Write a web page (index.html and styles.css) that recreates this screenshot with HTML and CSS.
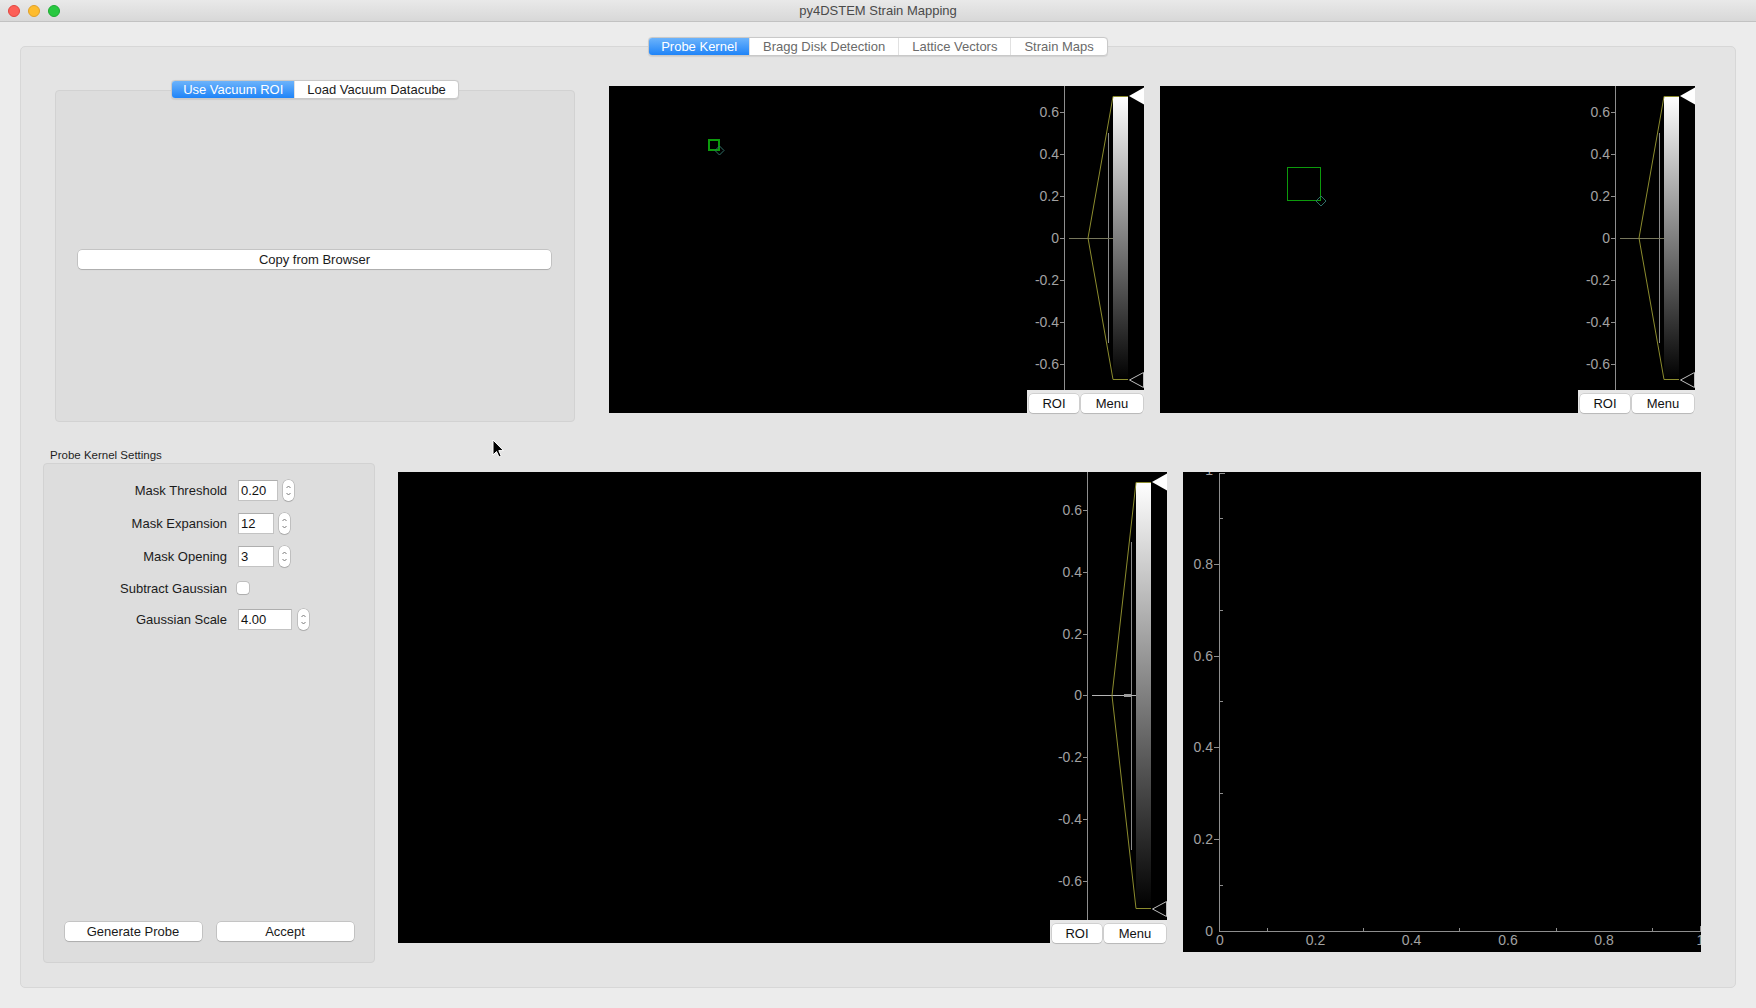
FILE: index.html
```html
<!DOCTYPE html>
<html>
<head>
<meta charset="utf-8">
<title>py4DSTEM Strain Mapping</title>
<link rel="stylesheet" href="styles.css">
</head>
<body>
<div class="titlebar">
  <div class="lights"><span class="light red"></span><span class="light yellow"></span><span class="light green"></span></div>
  <div class="title">py4DSTEM Strain Mapping</div>
  <div></div>
</div>
<div class="content">
  <div class="tabbar-wrap">
    <div class="tabbar outer">
      <div class="tab active">Probe Kernel</div>
      <div class="tab">Bragg Disk Detection</div>
      <div class="tab">Lattice Vectors</div>
      <div class="tab">Strain Maps</div>
    </div>
  </div>
  <div class="pane">
    <div class="row-top">
      <div class="vac">
        <div class="tabbar inner">
          <div class="tab active">Use Vacuum ROI</div>
          <div class="tab">Load Vacuum Datacube</div>
        </div>
        <div class="groupbox vacbox">
          <div class="btn copybtn">Copy from Browser</div>
        </div>
      </div>

      <div class="imgview iv-top first">
        <div class="img-area">
          <svg class="overlay">
            <rect x="100" y="54" width="10" height="10" fill="none" stroke="#0c9a0c" stroke-width="2"/>
            <polygon points="110.5,60 115,64.5 110.5,69 106,64.5" fill="none" stroke="#2f6f66" stroke-width="1"/>
          </svg>
        </div>
        <div class="hist-col">
          <div class="hist-area">
            <svg width="117" height="304" viewBox="0 0 117 304">
              <defs><linearGradient id="ga" x1="0" y1="0" x2="0" y2="1"><stop offset="0" stop-color="#ffffff"/><stop offset="1" stop-color="#000000"/></linearGradient></defs>
              <line x1="37.5" y1="0" x2="37.5" y2="304" class="ax"/>
              <line x1="33" y1="26.5" x2="37" y2="26.5" class="ax"/>
              <line x1="33" y1="68.5" x2="37" y2="68.5" class="ax"/>
              <line x1="33" y1="110.5" x2="37" y2="110.5" class="ax"/>
              <line x1="33" y1="152.5" x2="37" y2="152.5" class="ax"/>
              <line x1="33" y1="194.5" x2="37" y2="194.5" class="ax"/>
              <line x1="33" y1="236.5" x2="37" y2="236.5" class="ax"/>
              <line x1="33" y1="278.5" x2="37" y2="278.5" class="ax"/>
              <text x="32" y="31" class="tk">0.6</text>
              <text x="32" y="73" class="tk">0.4</text>
              <text x="32" y="115" class="tk">0.2</text>
              <text x="32" y="157" class="tk">0</text>
              <text x="32" y="199" class="tk">-0.2</text>
              <text x="32" y="241" class="tk">-0.4</text>
              <text x="32" y="283" class="tk">-0.6</text>
              <rect x="86" y="10" width="15" height="284" fill="url(#ga)"/>
              <line x1="81.5" y1="47" x2="81.5" y2="257" class="vline"/>
              <line x1="42" y1="152.5" x2="86" y2="152.5" class="hline"/>
              <polyline points="101,10.5 86,10.5 61,152 86,293.5 101,293.5" class="olive"/>
              <polygon points="102,10 117,1.5 117,18.5" fill="#ffffff"/>
              <polygon points="102.5,294 116.5,286.5 116.5,301.5" class="tri-out"/>
            </svg>
          </div>
          <div class="hist-btns"><div class="pbtn roi">ROI</div><div class="pbtn menu">Menu</div></div>
        </div>
      </div>

      <div class="imgview iv-top second">
        <div class="img-area">
          <svg class="overlay">
            <rect x="127.5" y="81.5" width="33" height="33" fill="none" stroke="#0c9a0c" stroke-width="1"/>
            <polygon points="161,110 166,115 161,120 156,115" fill="none" stroke="#2f6f66" stroke-width="1"/>
          </svg>
        </div>
        <div class="hist-col">
          <div class="hist-area">
            <svg width="117" height="304" viewBox="0 0 117 304">
              <defs><linearGradient id="gb" x1="0" y1="0" x2="0" y2="1"><stop offset="0" stop-color="#ffffff"/><stop offset="1" stop-color="#000000"/></linearGradient></defs>
              <line x1="37.5" y1="0" x2="37.5" y2="304" class="ax"/>
              <line x1="33" y1="26.5" x2="37" y2="26.5" class="ax"/>
              <line x1="33" y1="68.5" x2="37" y2="68.5" class="ax"/>
              <line x1="33" y1="110.5" x2="37" y2="110.5" class="ax"/>
              <line x1="33" y1="152.5" x2="37" y2="152.5" class="ax"/>
              <line x1="33" y1="194.5" x2="37" y2="194.5" class="ax"/>
              <line x1="33" y1="236.5" x2="37" y2="236.5" class="ax"/>
              <line x1="33" y1="278.5" x2="37" y2="278.5" class="ax"/>
              <text x="32" y="31" class="tk">0.6</text>
              <text x="32" y="73" class="tk">0.4</text>
              <text x="32" y="115" class="tk">0.2</text>
              <text x="32" y="157" class="tk">0</text>
              <text x="32" y="199" class="tk">-0.2</text>
              <text x="32" y="241" class="tk">-0.4</text>
              <text x="32" y="283" class="tk">-0.6</text>
              <rect x="86" y="10" width="15" height="284" fill="url(#gb)"/>
              <line x1="81.5" y1="47" x2="81.5" y2="257" class="vline"/>
              <line x1="42" y1="152.5" x2="86" y2="152.5" class="hline"/>
              <polyline points="101,10.5 86,10.5 61,152 86,293.5 101,293.5" class="olive"/>
              <polygon points="102,10 117,1.5 117,18.5" fill="#ffffff"/>
              <polygon points="102.5,294 116.5,286.5 116.5,301.5" class="tri-out"/>
            </svg>
          </div>
          <div class="hist-btns"><div class="pbtn roi">ROI</div><div class="pbtn menu">Menu</div></div>
        </div>
      </div>
    </div>

    <div class="row-bottom">
      <div class="settings">
        <div class="settings-label">Probe Kernel Settings</div>
        <div class="groupbox settings-box">
          <div class="form">
            <div class="flabel">Mask Threshold</div>
            <div class="field"><div class="input w40">0.20</div><div class="spin"><svg width="11" height="21" viewBox="0 0 11 21"><polyline points="3.5,8 5.5,6 7.5,8" class="chev"/><polyline points="3.5,13 5.5,15 7.5,13" class="chev"/></svg></div></div>
            <div class="flabel">Mask Expansion</div>
            <div class="field"><div class="input w36">12</div><div class="spin"><svg width="11" height="21" viewBox="0 0 11 21"><polyline points="3.5,8 5.5,6 7.5,8" class="chev"/><polyline points="3.5,13 5.5,15 7.5,13" class="chev"/></svg></div></div>
            <div class="flabel">Mask Opening</div>
            <div class="field"><div class="input w36">3</div><div class="spin"><svg width="11" height="21" viewBox="0 0 11 21"><polyline points="3.5,8 5.5,6 7.5,8" class="chev"/><polyline points="3.5,13 5.5,15 7.5,13" class="chev"/></svg></div></div>
            <div class="flabel">Subtract Gaussian</div>
            <div class="field"><div class="check"></div></div>
            <div class="flabel">Gaussian Scale</div>
            <div class="field gap6"><div class="input w54">4.00</div><div class="spin"><svg width="11" height="21" viewBox="0 0 11 21"><polyline points="3.5,8 5.5,6 7.5,8" class="chev"/><polyline points="3.5,13 5.5,15 7.5,13" class="chev"/></svg></div></div>
          </div>
          <div class="actions">
            <div class="btn">Generate Probe</div>
            <div class="btn">Accept</div>
          </div>
        </div>
      </div>

      <div class="imgview iv-bottom">
        <div class="img-area"></div>
        <div class="hist-col">
          <div class="hist-area">
            <svg width="117" height="448" viewBox="0 0 117 448">
              <defs><linearGradient id="gc" x1="0" y1="0" x2="0" y2="1"><stop offset="0" stop-color="#ffffff"/><stop offset="1" stop-color="#000000"/></linearGradient></defs>
              <line x1="37.5" y1="0" x2="37.5" y2="448" class="ax"/>
              <line x1="33" y1="38.5" x2="37" y2="38.5" class="ax"/>
              <line x1="33" y1="100.5" x2="37" y2="100.5" class="ax"/>
              <line x1="33" y1="162.5" x2="37" y2="162.5" class="ax"/>
              <line x1="33" y1="223.5" x2="37" y2="223.5" class="ax"/>
              <line x1="33" y1="285.5" x2="37" y2="285.5" class="ax"/>
              <line x1="33" y1="347.5" x2="37" y2="347.5" class="ax"/>
              <line x1="33" y1="409.5" x2="37" y2="409.5" class="ax"/>
              <text x="32" y="43" class="tk">0.6</text>
              <text x="32" y="105" class="tk">0.4</text>
              <text x="32" y="167" class="tk">0.2</text>
              <text x="32" y="228" class="tk">0</text>
              <text x="32" y="290" class="tk">-0.2</text>
              <text x="32" y="352" class="tk">-0.4</text>
              <text x="32" y="414" class="tk">-0.6</text>
              <rect x="86" y="10" width="15" height="427" fill="url(#gc)"/>
              <line x1="81.5" y1="70" x2="81.5" y2="378" class="vline"/>
              <line x1="42" y1="223.5" x2="86" y2="223.5" class="hline light"/>
              <line x1="74" y1="223.5" x2="81" y2="223.5" stroke="#9a9a9a" stroke-width="3"/>
              <polyline points="101,10.5 86,10.5 62,223.5 86,436.5 101,436.5" class="olive"/>
              <polygon points="102,10 117,1.5 117,18.5" fill="#ffffff"/>
              <polygon points="102.5,437 116.5,429.5 116.5,444.5" class="tri-out"/>
            </svg>
          </div>
          <div class="hist-btns"><div class="pbtn roi">ROI</div><div class="pbtn menu">Menu</div></div>
        </div>
      </div>

      <div class="plot2d">
        <svg width="518" height="480" viewBox="0 0 518 480">
          <line x1="36.5" y1="1" x2="36.5" y2="459.5" class="ax"/>
          <line x1="36" y1="459.5" x2="518" y2="459.5" class="ax"/>
          <line x1="36" y1="1.5" x2="42" y2="1.5" class="ax"/>
          <line x1="517.5" y1="454" x2="517.5" y2="459" class="ax"/>
          <line x1="31" y1="92.5" x2="36" y2="92.5" class="ax"/>
          <line x1="31" y1="184.5" x2="36" y2="184.5" class="ax"/>
          <line x1="31" y1="275.5" x2="36" y2="275.5" class="ax"/>
          <line x1="31" y1="367.5" x2="36" y2="367.5" class="ax"/>
          <line x1="37" y1="46.5" x2="40" y2="46.5" class="ax"/>
          <line x1="37" y1="138.5" x2="40" y2="138.5" class="ax"/>
          <line x1="37" y1="229.5" x2="40" y2="229.5" class="ax"/>
          <line x1="37" y1="321.5" x2="40" y2="321.5" class="ax"/>
          <line x1="37" y1="413.5" x2="40" y2="413.5" class="ax"/>
          <line x1="84.5" y1="456" x2="84.5" y2="459" class="ax"/>
          <line x1="180.5" y1="456" x2="180.5" y2="459" class="ax"/>
          <line x1="276.5" y1="456" x2="276.5" y2="459" class="ax"/>
          <line x1="373.5" y1="456" x2="373.5" y2="459" class="ax"/>
          <line x1="469.5" y1="456" x2="469.5" y2="459" class="ax"/>
          <text x="30" y="3" class="tk">1</text>
          <text x="30" y="97" class="tk">0.8</text>
          <text x="30" y="189" class="tk">0.6</text>
          <text x="30" y="280" class="tk">0.4</text>
          <text x="30" y="372" class="tk">0.2</text>
          <text x="30" y="464" class="tk">0</text>
          <text x="37" y="473" class="tk mid">0</text>
          <text x="132.5" y="473" class="tk mid">0.2</text>
          <text x="228.5" y="473" class="tk mid">0.4</text>
          <text x="325" y="473" class="tk mid">0.6</text>
          <text x="421" y="473" class="tk mid">0.8</text>
          <text x="517.5" y="473" class="tk mid">1</text>
        </svg>
      </div>
    </div>
  </div>
</div>
<svg class="cursor" width="13" height="20" viewBox="0 0 13 20"><path d="M1,1 L1,16 L4.5,12.5 L7,18 L9.2,17 L6.8,11.6 L11.5,11.6 Z" fill="#000" stroke="#fff" stroke-width="1" stroke-linejoin="round"/></svg>
</body>
</html>
```
FILE: styles.css
```css
* { box-sizing: border-box; margin: 0; padding: 0; }
html, body { width: 1756px; height: 1008px; overflow: hidden; }
body {
  background: #ececec;
  font-family: "Liberation Sans", Arial, sans-serif;
  font-size: 13px;
  color: #1b1b1b;
  position: relative;
}

/* title bar */
.titlebar {
  height: 22px;
  display: grid;
  grid-template-columns: 1fr auto 1fr;
  align-items: center;
  background: linear-gradient(#e9e9e9, #d8d8d8);
  border-bottom: 1px solid #c2c2c2;
}
.lights { display: flex; gap: 8px; padding-left: 8px; }
.light { width: 12px; height: 12px; border-radius: 50%; }
.light.red { background: #fd5f57; border: 1px solid #e2463f; }
.light.yellow { background: #febc2e; border: 1px solid #e0a028; }
.light.green { background: #28c840; border: 1px solid #1daa32; }
.title { color: #4a4a4a; font-size: 13px; }

/* content */
.content { padding: 15px 20px 0; }
.tabbar-wrap { display: flex; justify-content: center; position: relative; z-index: 1; }
.tabbar {
  display: flex;
  height: 19px;
  background: #fff;
  border: 1px solid #c9c9c9;
  border-radius: 4px;
  overflow: hidden;
  box-shadow: 0 0.5px 1px rgba(0,0,0,0.08);
}
.tab {
  padding: 0 13px;
  line-height: 17px;
  white-space: nowrap;
  border-left: 1px solid #e1e1e1;
}
.tab:first-child { border-left: none; }
.tabbar.outer .tab { color: #6a6a6a; }
.tabbar.outer .tab:first-child { padding: 0 12px; }
.tabbar.inner { position: relative; z-index: 1; }
.tabbar.inner .tab { padding: 0 12px; color: #1a1a1a; }
.tabbar.inner .tab:first-child { padding: 0 11px; }
.tabbar .tab.active { background: linear-gradient(#6cb3fb, #1f84f8); color: #fff; }

.pane {
  margin-top: -10px;
  height: 942px;
  background: #e4e4e4;
  border: 1px solid #d7d7d7;
  border-radius: 5px;
}

.groupbox {
  background: #dddddd;
  border: 1px solid #d2d2d2;
  border-radius: 4px;
}

/* top row */
.row-top { display: flex; align-items: flex-start; padding-top: 33px; }
.vac { margin-left: 34px; width: 520px; display: flex; flex-direction: column; align-items: center; }
.vacbox {
  width: 100%;
  height: 332px;
  margin-top: -9px;
  display: flex;
  align-items: center;
  padding: 6px 23px 0 22px;
}

.btn {
  height: 19px;
  background: #fff;
  border-radius: 4px;
  box-shadow: 0 0 0 0.5px rgba(0,0,0,0.22), 0 1px 1px rgba(0,0,0,0.12);
  display: flex;
  align-items: center;
  justify-content: center;
  color: #1a1a1a;
  white-space: nowrap;
}
.copybtn { width: 100%; }

/* image views */
.imgview { display: flex; background: #000; }
.iv-top { width: 535px; height: 327px; margin-top: 6px; }
.iv-top.first { margin-left: 34px; }
.iv-top.second { margin-left: 16px; }
.img-area { flex: 1; background: #000; }
.overlay { display: block; width: 100%; height: 100%; }
.hist-col { width: 117px; display: flex; flex-direction: column; }
.hist-area { flex: 1; background: #000; overflow: hidden; }
.hist-area svg { display: block; }
.hist-btns {
  height: 23px;
  background: #e7e7e7;
  display: flex;
  gap: 2px;
  padding: 4px 1px 0 2px;
}
.pbtn {
  height: 19px;
  background: #fff;
  border-radius: 4px;
  box-shadow: 0 0 0 0.5px rgba(0,0,0,0.2), 0 1px 1px rgba(0,0,0,0.1);
  display: flex;
  align-items: center;
  justify-content: center;
  color: #111;
}
.pbtn.roi { width: 50px; }
.pbtn.menu { width: 62px; }

/* svg plot parts */
.ax { stroke: #8e8e8e; stroke-width: 1; }
.tk { fill: #a2a2a2; font-family: "Liberation Sans", Arial, sans-serif; font-size: 14px; text-anchor: end; }
.tk.mid { text-anchor: middle; }
.vline { stroke: #8a8a8a; stroke-width: 1; }
.hline { stroke: #77775c; stroke-width: 1; }
.hline.light { stroke: #b5b5b5; }
.olive { fill: none; stroke: #8c8c2e; stroke-width: 1; }
.tri-out { fill: none; stroke: #bdbdbd; stroke-width: 1; }

/* bottom row */
.row-bottom { display: flex; align-items: flex-start; margin-top: 25px; }
.settings { margin-left: 22px; width: 332px; }
.settings-label { font-size: 11.5px; line-height: 16px; padding-left: 7px; color: #1f1f1f; }
.settings-box {
  height: 500px;
  display: flex;
  flex-direction: column;
  padding-top: 16px;
}
.form {
  display: grid;
  grid-template-columns: 183px auto;
  grid-template-rows: 21px 21px 21px 18px 21px;
  column-gap: 11px;
  row-gap: 12px;
  align-items: center;
}
.flabel { text-align: right; white-space: nowrap; }
.field { display: flex; align-items: center; gap: 5px; }
.field.gap6 { gap: 6px; }
.input {
  height: 21px;
  background: #fff;
  border: 1px solid #c3c3c3;
  border-top-color: #aeaeae;
  padding-left: 2px;
  line-height: 19px;
  color: #111;
}
.w40 { width: 40px; }
.w36 { width: 36px; }
.w54 { width: 54px; }
.spin {
  width: 11px;
  height: 21px;
  background: #fff;
  border-radius: 5px;
  box-shadow: 0 0 0 0.5px rgba(0,0,0,0.25), 0 1px 1px rgba(0,0,0,0.1);
}
.spin svg { display: block; }
.chev { fill: none; stroke: #7a7a7a; stroke-width: 1; }
.check {
  width: 12px;
  height: 12px;
  margin-left: -1px;
  background: #fff;
  border-radius: 3px;
  box-shadow: 0 0 0 0.5px rgba(0,0,0,0.25), 0 0.5px 1px rgba(0,0,0,0.1);
}
.actions {
  margin-top: auto;
  margin-bottom: 21px;
  display: flex;
  justify-content: center;
  gap: 15px;
}
.actions .btn { width: 137px; }

.iv-bottom { width: 769px; height: 471px; margin-left: 23px; margin-top: 25px; }
.plot2d { width: 518px; height: 480px; margin-left: 16px; margin-top: 25px; background: #000; overflow: hidden; }
.plot2d svg { display: block; }

.cursor { position: absolute; left: 492px; top: 439px; }
```
